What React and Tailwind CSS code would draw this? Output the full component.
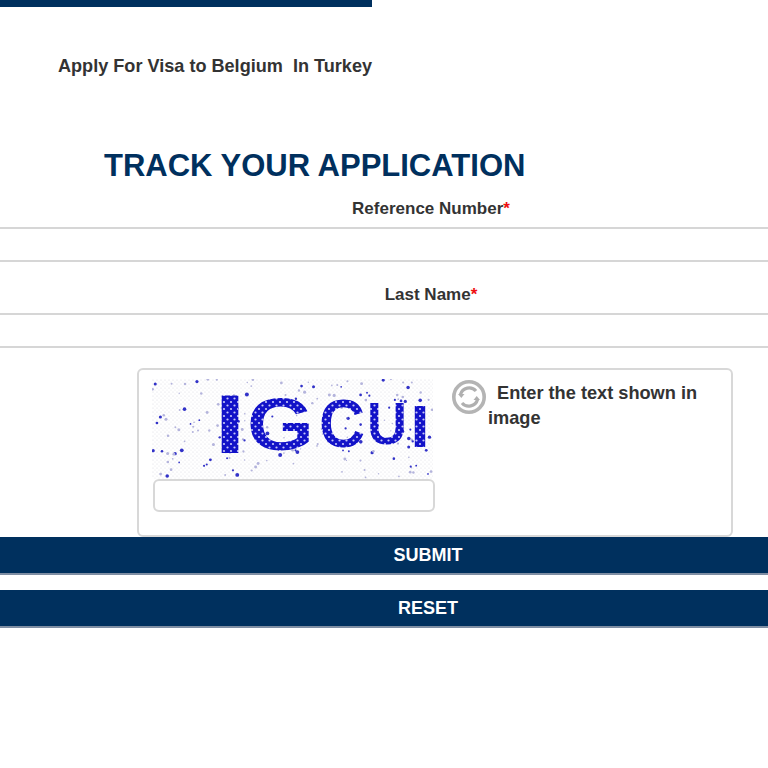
import React from "react";

function makeDots() {
  let s = 12345;
  const r = () => {
    s = (s * 16807) % 2147483647;
    return s / 2147483647;
  };
  const dots = [];
  for (let i = 0; i < 190; i++) {
    const x = r() * 281;
    const y = r() * 100;
    const dark = r() > 0.6;
    dots.push({
      x,
      y,
      rad: dark ? 0.8 + r() * 1.2 : 0.6 + r() * 1.0,
      fill: dark ? "#3232c8" : "#b4b4dc",
    });
  }
  return dots;
}
const dots = makeDots();

function Captcha() {
  const letter = "font-['Liberation_Sans',sans-serif] font-bold";
  return (
    <svg width="281" height="100" viewBox="0 0 281 100" className="block">
      <defs>
        <pattern id="stip" width="4" height="4" patternUnits="userSpaceOnUse">
          <rect width="4" height="4" fill="#ffffff" />
          <circle cx="1" cy="1" r="0.6" fill="#dcdce4" />
          <circle cx="3" cy="3" r="0.6" fill="#e6e6ec" />
        </pattern>
        <pattern id="cells" width="7" height="7" patternUnits="userSpaceOnUse">
          <rect width="7" height="7" fill="#1212c8" />
          <circle cx="2" cy="2" r="1.1" fill="#c8c8f8" />
          <circle cx="5.5" cy="5.5" r="1.1" fill="#c8c8f8" />
        </pattern>
      </defs>
      <rect width="281" height="100" fill="url(#stip)" />
      {dots.map((d, i) => (
        <circle key={i} cx={d.x} cy={d.y} r={d.rad} fill={d.fill} />
      ))}
      <g fill="url(#cells)" className={letter}>
        <text x="62" y="74" fontSize="83" textLength="32" lengthAdjust="spacingAndGlyphs">I</text>
        <text x="95" y="71" fontSize="75" textLength="67" lengthAdjust="spacingAndGlyphs">G</text>
        <text x="167" y="68" fontSize="68" textLength="46" lengthAdjust="spacingAndGlyphs">C</text>
        <text x="215" y="65" fontSize="59" textLength="40" lengthAdjust="spacingAndGlyphs">U</text>
        <text x="258" y="68" fontSize="60" textLength="20" lengthAdjust="spacingAndGlyphs">I</text>
      </g>
    </svg>
  );
}

function RefreshIcon() {
  return (
    <svg width="36" height="36" viewBox="0 0 36 36" fill="none" className="shrink-0">
      <circle cx="18" cy="18" r="15.2" stroke="#b4b4b4" strokeWidth="3.6" />
      <path d="M9.5 15.5a9 9 0 0 1 15.5-3.5" stroke="#b0b0b0" strokeWidth="3.2" />
      <path d="M26.5 20.5a9 9 0 0 1-15.5 3.5" stroke="#b0b0b0" strokeWidth="3.2" />
      <path d="M7 15h6.5l-3.2 4z" fill="#b0b0b0" />
      <path d="M29 21h-6.5l3.2-4z" fill="#b0b0b0" />
    </svg>
  );
}

function Field({ label }) {
  return (
    <div className="flex flex-col items-center">
      <label className="pl-[6px] text-[17px] leading-5 font-bold text-[#333333]">
        {label}
        <span className="text-[#ee1111]">*</span>
      </label>
      <input className="mt-[8px] block h-[35px] w-full border-y-2 border-[#d6d6d6] bg-white" />
    </div>
  );
}

export default function App() {
  return (
    <div className="h-[768px] w-[768px] overflow-hidden bg-white font-['Liberation_Sans',Arial,sans-serif]">
      <div className="h-[7px] w-[372px] bg-[#00305e]" />
      <h2 className="mt-[48px] ml-[58px] text-[18.1px] leading-[22px] font-bold whitespace-pre text-[#333333]">
        Apply For Visa to Belgium  In Turkey
      </h2>
      <h1 className="mt-[71px] ml-[104px] text-[31px] leading-[36px] font-bold whitespace-nowrap text-[#00305e]">
        TRACK YOUR APPLICATION
      </h1>
      <form className="mt-[15px] flex w-[856px] flex-col">
        <Field label="Reference Number" />
        <div className="mt-[23px]">
          <Field label="Last Name" />
        </div>
        <div className="mt-[20px] ml-[137px] flex h-[169px] w-[596px] gap-[16px] rounded-[6px] border-2 border-[#d8d8d8] pt-[9px] pl-[13px]">
          <div className="w-[283px] shrink-0">
            <Captcha />
            <input className="ml-px block h-[33px] w-[282px] rounded-[6px] border-2 border-[#d8d8d8] bg-white" />
          </div>
          <div className="w-[255px]">
            <div className="flex h-[27px] items-start">
              <RefreshIcon />
              <span className="mt-[2px] ml-[10px] text-[18.2px] leading-[25px] font-bold whitespace-nowrap text-[#333333]">
                Enter the text shown in
              </span>
            </div>
            <div className="ml-[37px] text-[18.2px] leading-[25px] font-bold text-[#333333]">
              image
            </div>
          </div>
        </div>
        <button type="button" className="h-[38px] w-full border-b-2 border-[#7f8ea3] bg-[#00305e] text-[18px] font-bold text-white">
          SUBMIT
        </button>
        <button type="button" className="mt-[15px] h-[38px] w-full border-b-2 border-[#7f8ea3] bg-[#00305e] text-[18px] font-bold text-white">
          RESET
        </button>
      </form>
    </div>
  );
}
